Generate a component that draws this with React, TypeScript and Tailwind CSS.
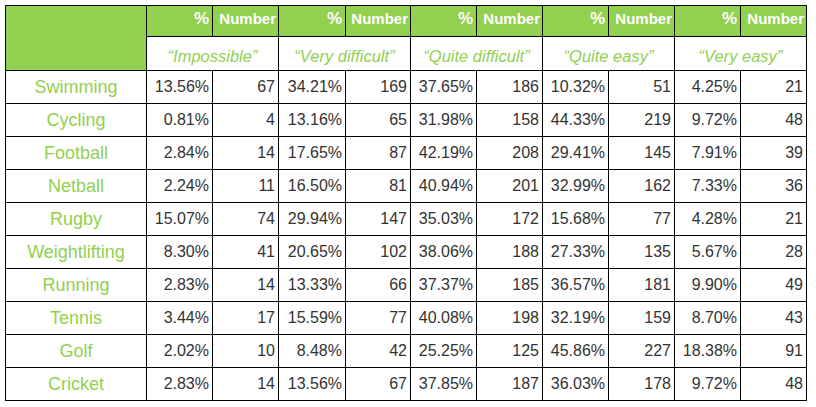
import { Fragment } from "react";

const rows: [string, string, number, string, number, string, number, string, number, string, number][] = [
  ["Swimming", "13.56%", 67, "34.21%", 169, "37.65%", 186, "10.32%", 51, "4.25%", 21],
  ["Cycling", "0.81%", 4, "13.16%", 65, "31.98%", 158, "44.33%", 219, "9.72%", 48],
  ["Football", "2.84%", 14, "17.65%", 87, "42.19%", 208, "29.41%", 145, "7.91%", 39],
  ["Netball", "2.24%", 11, "16.50%", 81, "40.94%", 201, "32.99%", 162, "7.33%", 36],
  ["Rugby", "15.07%", 74, "29.94%", 147, "35.03%", 172, "15.68%", 77, "4.28%", 21],
  ["Weightlifting", "8.30%", 41, "20.65%", 102, "38.06%", 188, "27.33%", 135, "5.67%", 28],
  ["Running", "2.83%", 14, "13.33%", 66, "37.37%", 185, "36.57%", 181, "9.90%", 49],
  ["Tennis", "3.44%", 17, "15.59%", 77, "40.08%", 198, "32.19%", 159, "8.70%", 43],
  ["Golf", "2.02%", 10, "8.48%", 42, "25.25%", 125, "45.86%", 227, "18.38%", 91],
  ["Cricket", "2.83%", 14, "13.56%", 67, "37.85%", 187, "36.03%", 178, "9.72%", 48],
];

const labels = ["Impossible", "Very difficult", "Quite difficult", "Quite easy", "Very easy"];
const widths = [141, 66, 66, 67, 65, 66, 66, 66, 66, 66, 66];

export default function App() {
  return (
    <div className="w-[816px] h-[407px] bg-white pt-[5px] pl-[5px] font-['Liberation_Sans',Arial,sans-serif]">
      <table className="table-fixed border-collapse w-[802px]">
        <colgroup>
          {widths.map((w, i) => (
            <col key={i} style={{ width: w }} />
          ))}
        </colgroup>
        <thead>
          <tr className="h-[31px]">
            <th rowSpan={2} className="border border-black bg-[#92d050]"></th>
            {labels.map((l) => (
              <Fragment key={l}>
                <th className="border border-black bg-[#92d050] text-white text-right pr-[3px] pb-[5px] leading-[20px] text-[17px] font-bold">
                  %
                </th>
                <th className="border border-black bg-[#92d050] text-white text-right pr-[2px] pb-[5px] leading-[20px] text-[15px] font-bold">
                  Number
                </th>
              </Fragment>
            ))}
          </tr>
          <tr className="h-[34px]">
            {labels.map((l) => (
              <th key={l} colSpan={2} className="border border-black text-[#92d050] italic font-normal pt-[4px] leading-[20px] text-[16.5px] text-center">
                “{l}”
              </th>
            ))}
          </tr>
        </thead>
        <tbody>
          {rows.map((r) => (
            <tr key={r[0]} className="h-[33px]">
              <td className="border border-black text-center text-[#92d050] text-[18px]">{r[0]}</td>
              {r.slice(1).map((v, i) => (
                <td key={i} className="border border-black text-right pr-[3px] text-[16px] text-[#333333]">
                  {v}
                </td>
              ))}
            </tr>
          ))}
        </tbody>
      </table>
    </div>
  );
}
